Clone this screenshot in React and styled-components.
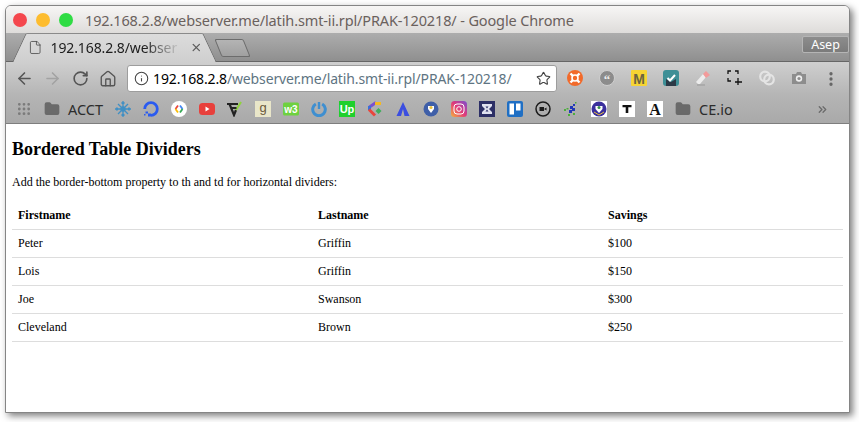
import styled, { createGlobalStyle } from 'styled-components';
import { ArrowLeft, ArrowRight, RotateCw, Home, Info, Star, File, Folder, Grip, MoreVertical, ChevronsRight, X } from 'lucide-react';

const GlobalStyle = createGlobalStyle`
  html, body { margin: 0; padding: 0; background: #fff; }
  body { width: 859px; height: 422px; overflow: hidden; }
`;

const rows = [
  ['Peter', 'Griffin', '$100'],
  ['Lois', 'Griffin', '$150'],
  ['Joe', 'Swanson', '$300'],
  ['Cleveland', 'Brown', '$250'],
];

// bookmark favicons, 16x16
const favicons = [
  <svg key="snow" viewBox="0 0 16 16" stroke="#3f8fc4" strokeWidth="1.3" fill="#3f8fc4"><path d="M8 0v16M0 8h16M3 3l10 10M13 3L3 13M6.500 1.500L8 3l1.500-1.500M6.500 14.500L8 13l1.500 1.500M1.500 6.500L3 8 1.500 9.500M14.500 6.500L13 8l1.500 1.500" fill="none" /><circle cx="8" cy="8" r="2" /></svg>,
  <svg key="do" viewBox="0 0 16 16" fill="none"><path d="M8 14.300A6.300 6.300 0 1 0 1.700 8" stroke="#2a5bf0" strokeWidth="2.800" /><path d="M5 12.500h3v3H5zM2.500 10.500h2.500v2H2.500zM1 13h1.500v1.500H1z" fill="#2a5bf0" /></svg>,
  <svg key="gdev" viewBox="0 0 16 16" fill="none" strokeWidth="1.800"><circle cx="8" cy="8" r="8" fill="#fff" /><path d="M7 4.500L4.500 8" stroke="#e8453c" /><path d="M4.500 8L7 11.500" stroke="#fbbc05" /><path d="M9 4.500L11.500 8" stroke="#4285f4" /><path d="M11.500 8L9 11.500" stroke="#34a853" /></svg>,
  <svg key="yt" viewBox="0 0 16 16"><rect y="2" width="16" height="12" rx="3.500" fill="#e8403c" /><path d="M6.500 5.500L10.500 8l-4 2.500z" fill="#fff" /></svg>,
  <svg key="v" viewBox="0 0 16 16" fill="none"><path d="M0 3h11M2.500 3L7 14l2-5" stroke="#222" strokeWidth="2.200" /><path d="M9 9l5-8" stroke="#8fd33c" strokeWidth="2" /><path d="M5 7h4.500" stroke="#222" strokeWidth="1.800" /></svg>,
  <svg key="g" viewBox="0 0 16 16"><rect width="16" height="16" fill="#e9e6c9" /><text x="8" y="11" textAnchor="middle" fontFamily="Liberation Sans, sans-serif" fontSize="13" fill="#6b5a3a">g</text></svg>,
  <svg key="w3" viewBox="0 0 16 16"><rect y="1.500" width="16" height="13" rx="1.500" fill="#6ed13f" /><text x="8" y="12" textAnchor="middle" fontFamily="Liberation Sans, sans-serif" fontSize="10" fontWeight="700" fill="#fff">ᴡ3</text></svg>,
  <svg key="power" viewBox="0 0 16 16" fill="none" stroke="#3f8fd0" strokeWidth="3"><path d="M4.800 3a6.300 6.300 0 1 0 6.400 0" /><path d="M8 1v7" strokeWidth="2.400" /></svg>,
  <svg key="up" viewBox="0 0 16 16"><rect width="16" height="16" fill="#1fd02c" /><text x="8" y="12" textAnchor="middle" fontFamily="Liberation Sans, sans-serif" fontSize="11" fontWeight="700" fill="#fff">Up</text></svg>,
  <svg key="c" viewBox="0 0 16 16" fill="none" strokeWidth="3"><path d="M9 1.500L2.500 6" stroke="#7a4fd0" /><path d="M2.500 5v4" stroke="#3a6fd8" /><path d="M2 8.500L8 14.500" stroke="#e8453c" /><path d="M8 2.500h6" stroke="#f5b921" /><path d="M11.500 7l3 3-3 3-3-3z" fill="#3fae5a" stroke="none" /></svg>,
  <svg key="atlas" viewBox="0 0 16 16"><path d="M8 1l6.500 14H9.500L8 8 6 15H1.500z" fill="#3b4ee0" /></svg>,
  <svg key="uni" viewBox="0 0 16 16"><circle cx="8" cy="8" r="7.500" fill="#3f5fa8" /><path d="M5 5h6v3l-3 4-3-4z" fill="#fff" /><circle cx="8" cy="6.500" r="1.500" fill="#e8c03c" /></svg>,
  <svg key="ig" viewBox="0 0 16 16" fill="none"><defs><linearGradient id="ig" x1="0" y1="1" x2="1" y2="0"><stop offset="0" stopColor="#f5b13c" /><stop offset=".5" stopColor="#e0397a" /><stop offset="1" stopColor="#7a4fd0" /></linearGradient></defs><rect width="16" height="16" rx="3.500" fill="url(#ig)" /><rect x="3" y="3" width="10" height="10" rx="3" stroke="#fff" /><circle cx="8" cy="8" r="2.300" stroke="#fff" /></svg>,
  <svg key="x" viewBox="0 0 16 16"><rect width="16" height="16" fill="#2c2f66" /><path d="M3 3h10v2l-3 3 3 3v2H3v-2l3-3-3-3z" fill="#dfe1f0" /><path d="M6.500 5.500h3L8 7.500zM8 8.500l1.500 2h-3z" fill="#2c2f66" /></svg>,
  <svg key="trello" viewBox="0 0 16 16"><rect width="16" height="16" rx="2" fill="#1f6fc4" /><rect x="2.500" y="2.500" width="4.500" height="11" fill="#fff" /><rect x="9" y="2.500" width="4.500" height="7" fill="#fff" /></svg>,
  <svg key="rec" viewBox="0 0 16 16" fill="none"><circle cx="8" cy="8" r="7" stroke="#1c1c1c" strokeWidth="1.500" /><path d="M4.500 6h4.500v4H4.500zM9 8l2.500-1.500v3z" fill="#1c1c1c" /></svg>,
  <svg key="dots" viewBox="0 0 16 16" fill="#2238b8"><path d="M7 5h3v3H7zM9 7h3v3H9zM6 9h3v3H6zM10 3h2v2h-2z" /><path d="M1 8h2v2H1zM12 1h1.500v1.500H12zM5 13h2v2H5zM10 12h2v2h-2zM3.500 7h2v1.500h-2z" fill="#4caf3c" /></svg>,
  <svg key="tut" viewBox="0 0 16 16"><rect width="16" height="16" fill="#fff" /><circle cx="8" cy="8" r="7.500" fill="#3a2f9c" /><path d="M4.500 5h7v3L8 12 4.500 8z" fill="#fff" /><circle cx="8" cy="6.500" r="1.500" fill="#3a8f4c" /><path d="M3 11l5 3 5-3" stroke="#e8c03c" fill="none" /></svg>,
  <svg key="t" viewBox="0 0 16 16"><rect width="16" height="16" fill="#fff" /><path d="M3.500 4h9v2.200H9.300V12H6.700V6.200H3.500z" fill="#111" /></svg>,
  <svg key="a" viewBox="0 0 16 16"><rect width="16" height="16" fill="#fff" /><text x="8" y="14" textAnchor="middle" fontFamily="Liberation Serif, serif" fontSize="16" fontWeight="700" fill="#111">A</text></svg>,
];

// extension toolbar icons, 16x16
const extensions = [
  <svg key="orange" viewBox="0 0 16 16"><circle cx="8" cy="8" r="8" fill="#f26a2a" /><circle cx="8" cy="8" r="3" fill="none" stroke="#fff" strokeWidth="1.600" /><path d="M3.500 3.500l2.500 2.500M12.500 3.500L10 6M3.500 12.500L6 10M12.500 12.500L10 10" stroke="#fff" strokeWidth="2.400" /></svg>,
  <svg key="quote" viewBox="0 0 16 16"><circle cx="8" cy="8" r="7.500" fill="#8c8c8c" stroke="#cfcfcf" /><text x="8" y="14" textAnchor="middle" fontFamily="Liberation Serif, serif" fontSize="13" fontWeight="700" fill="#eee">“</text></svg>,
  <svg key="m" viewBox="0 0 16 16"><rect width="16" height="16" rx="1" fill="#f7d433" /><text x="8" y="13.500" textAnchor="middle" fontFamily="Liberation Sans, sans-serif" fontSize="14" fontWeight="700" fill="#6b6440">M</text></svg>,
  <svg key="check" viewBox="0 0 16 16"><rect width="16" height="16" rx="3" fill="#3e8f96" /><path d="M3 9l5 3 5-3v7H3z" fill="#2d3a47" /><path d="M4.500 8L7 10.500 12 5" fill="none" stroke="#fff" strokeWidth="2" /></svg>,
  <svg key="eraser" viewBox="0 0 16 16"><path d="M1 12l7-8 3 3-6 7H3z" fill="#ececec" /><path d="M8 4l3-3 4 4-4 3z" fill="#f29a9a" /><path d="M2 15h8" stroke="#999" /></svg>,
  <svg key="crop" viewBox="0 0 16 16" fill="none" stroke="#111" strokeWidth="1.300"><path d="M1 4V1h3M8 1h3v3M1 8v3h3" /><path d="M11 8v7M8 12h7" /></svg>,
  <svg key="swirl" viewBox="0 0 16 16" fill="none" stroke="#e4e4e4" strokeWidth="2.200"><circle cx="6" cy="6.500" r="4.800" /><circle cx="10" cy="9.500" r="4.800" /></svg>,
  <svg key="cam" viewBox="0 0 16 16"><path d="M1 4h4l1-2h4l1 2h4v10H1z" fill="#8d8d8d" /><circle cx="8" cy="8.500" r="3.200" fill="#eee" /><circle cx="8" cy="8.500" r="1.600" fill="#8d8d8d" /></svg>,
];

const App = () => (
  <Page>
    <GlobalStyle />
    <Win>
      <TitleBar>
        <Light $color="#f4474d" />
        <Light $color="#fdbc2e" />
        <Light $color="#2fdc44" />
        <TitleText>192.168.2.8/webserver.me/latih.smt-ii.rpl/PRAK-120218/ - Google Chrome</TitleText>
      </TitleBar>

      <TabStrip>
        <Tab>
          <File size={15} strokeWidth={1.3} color="#444" />
          <TabLabel>192.168.2.8/webser</TabLabel>
          <X size={13} strokeWidth={2.4} color="#5c5c5c" />
        </Tab>
        <NewTab />
        <Profile>Asep</Profile>
      </TabStrip>

      <Toolbar>
        <NavBtn><ArrowLeft size={19} strokeWidth={2} color="#555" /></NavBtn>
        <NavBtn><ArrowRight size={19} strokeWidth={2} color="#a2a2a2" /></NavBtn>
        <NavBtn><RotateCw size={17} strokeWidth={2.3} color="#555" /></NavBtn>
        <NavBtn><Home size={18} strokeWidth={1.8} color="#555" /></NavBtn>
        <Omnibox>
          <Info size={15} strokeWidth={1.7} color="#444" />
          <Url><b>192.168.2.8</b>/webserver.me/latih.smt-ii.rpl/PRAK-120218/</Url>
          <Star size={15} strokeWidth={1.8} color="#444" />
        </Omnibox>
        <Extensions>
          {extensions.map((icon) => <ExtBtn key={icon.key}>{icon}</ExtBtn>)}
          <ExtBtn><MoreVertical size={18} strokeWidth={2.4} color="#666" /></ExtBtn>
        </Extensions>
      </Toolbar>

      <BookmarkBar>
        <BookmarkIcon><Grip size={16} strokeWidth={2.2} color="#7b7b7b" /></BookmarkIcon>
        <BookmarkIcon><Folder size={16} fill="#6a6a6a" color="#6a6a6a" /></BookmarkIcon>
        <BookmarkText>ACCT</BookmarkText>
        {favicons.map((icon) => <BookmarkIcon key={icon.key}>{icon}</BookmarkIcon>)}
        <BookmarkIcon><Folder size={16} fill="#6a6a6a" color="#6a6a6a" /></BookmarkIcon>
        <BookmarkText>CE.io</BookmarkText>
        <More><ChevronsRight size={13} strokeWidth={2.4} color="#6a6a6a" /></More>
      </BookmarkBar>

      <Content>
        <Heading>Bordered Table Dividers</Heading>
        <Lead>Add the border-bottom property to th and td for horizontal dividers:</Lead>
        <Table>
          <colgroup>
            <col width="300" />
            <col width="290" />
            <col />
          </colgroup>
          <thead>
            <tr><Th>Firstname</Th><Th>Lastname</Th><Th>Savings</Th></tr>
          </thead>
          <tbody>
            {rows.map((row) => (
              <tr key={row[0]}>
                {row.map((cell, i) => <Td key={i}>{cell}</Td>)}
              </tr>
            ))}
          </tbody>
        </Table>
      </Content>
    </Win>
  </Page>
);

const Page = styled.div`
  box-sizing: border-box;
  width: 859px;
  height: 422px;
  padding: 5px 9px 9px 5px;
`;

const Win = styled.div`
  box-sizing: border-box;
  height: 408px;
  display: flex;
  flex-direction: column;
  border: 1px solid #858585;
  border-radius: 6px 6px 0 0;
  background: #fff;
  box-shadow: 3px 3px 7px rgba(0, 0, 0, 0.5);
  overflow: hidden;
`;

const TitleBar = styled.div`
  flex: none;
  height: 27px;
  display: flex;
  align-items: center;
  gap: 9px;
  padding-left: 7px;
  background: linear-gradient(#f7f6f5, #dedcda);
`;

const Light = styled.span`
  flex: none;
  width: 14px;
  height: 14px;
  border-radius: 50%;
  background: ${(p) => p.$color};
`;

const TitleText = styled.span`
  margin-left: 3px;
  font: 14.5px "Noto Sans", sans-serif;
  letter-spacing: -0.13px;
  color: #6a615d;
  white-space: nowrap;
`;

const TabStrip = styled.div`
  flex: none;
  box-sizing: border-box;
  height: 29px;
  display: flex;
  align-items: flex-end;
  padding-left: 6px;
  background: linear-gradient(#adadad, #8f8f8f);
  border-bottom: 1px solid #666;
`;

const Tab = styled.div`
  position: relative;
  isolation: isolate;
  box-sizing: border-box;
  width: 205px;
  height: 29px;
  margin-bottom: -1px;
  display: flex;
  align-items: center;
  padding: 0 14px 0 16px;
  gap: 8px;

  &::before,
  &::after {
    content: '';
    position: absolute;
    top: 0;
    bottom: 0;
    width: 60%;
    z-index: -1;
    background: linear-gradient(#dcdcdc, #cfcfcf);
    border-top: 1px solid #8a8a8a;
  }
  &::before {
    left: 7px;
    transform: skewX(-25deg);
    border-left: 1px solid #6e6e6e;
    border-top-left-radius: 2px;
  }
  &::after {
    right: 7px;
    transform: skewX(25deg);
    border-right: 1px solid #6e6e6e;
    border-top-right-radius: 2px;
  }
`;

const TabLabel = styled.span`
  flex: none;
  width: 131px;
  margin-right: 1px;
  white-space: nowrap;
  font: 14px "Noto Sans", sans-serif;
  letter-spacing: -0.1px;
  color: #1d1d1d;
  mask-image: linear-gradient(to right, #000 72%, transparent 100%);
`;

const NewTab = styled.div`
  width: 27px;
  height: 16px;
  margin: 0 0 4px 1px;
  transform: skewX(22deg);
  background: linear-gradient(#b4b4b4, #a0a0a0);
  border: 1px solid #6c6c6c;
  border-radius: 2px;
`;

const Profile = styled.div`
  box-sizing: border-box;
  width: 47px;
  height: 17px;
  margin: 0 0 8px auto;
  text-align: center;
  background: linear-gradient(#8d8d8d, #7b7b7b);
  border: 1px solid #b5b5b5;
  border-radius: 2px;
  font: 12.5px/15px "Noto Sans", sans-serif;
  color: #fff;
`;

const Toolbar = styled.div`
  flex: none;
  height: 33px;
  display: flex;
  align-items: center;
  padding-left: 4px;
  background: linear-gradient(#cfcfcf, #b5b5b5);
`;

const NavBtn = styled.div`
  flex: none;
  width: 28px;
  display: flex;
  justify-content: center;
`;

const Omnibox = styled.div`
  flex: none;
  box-sizing: border-box;
  width: 430px;
  height: 27px;
  margin-left: 5px;
  display: flex;
  align-items: center;
  padding: 0 5px 0 6px;
  background: #fff;
  border: 1px solid #9d9d9d;
  border-radius: 3px;
`;

const Url = styled.span`
  flex: 1;
  margin-left: 4px;
  font: 14px "Noto Sans", sans-serif;
  letter-spacing: -0.13px;
  color: #5e7482;
  white-space: nowrap;

  b {
    font-weight: 400;
    color: #000;
  }
`;

const Extensions = styled.div`
  display: flex;
  margin-left: 2px;
`;

const ExtBtn = styled.div`
  flex: none;
  width: 32px;
  display: flex;
  justify-content: center;

  svg {
    display: block;
  }
  svg:not([class]) {
    width: 16px;
    height: 16px;
  }
`;

const BookmarkBar = styled.div`
  flex: none;
  box-sizing: border-box;
  height: 29px;
  display: flex;
  align-items: center;
  padding-left: 4px;
  background: linear-gradient(#b5b5b5, #a9a9a9);
  border-bottom: 1px solid #7e7e7e;
`;

const BookmarkIcon = styled.div`
  flex: none;
  width: 28px;
  display: flex;
  justify-content: center;

  svg:not([class]) {
    width: 16px;
    height: 16px;
  }
`;

const BookmarkText = styled.span`
  margin: 0 6px 0 2px;
  font: 14.5px "Noto Sans", sans-serif;
  color: #2c2c2c;
`;

const More = styled.div`
  display: flex;
  margin-left: auto;
  margin-right: 20px;
`;

const Content = styled.div`
  flex: 1;
  padding: 0 6px;
  font: 12px "Liberation Serif", "Times New Roman", serif;
  color: #000;
`;

const Heading = styled.h2`
  margin: 15px 0 15px;
  font-size: 18px;
  font-weight: 700;
`;

const Lead = styled.p`
  margin: 0 0 12px;
`;

const Table = styled.table`
  width: 100%;
  table-layout: fixed;
  border-collapse: collapse;
  border-spacing: 0;
`;

const Th = styled.th`
  padding: 7px 6px;
  text-align: left;
  border-bottom: 1px solid #ddd;
  line-height: 13px;
`;

const Td = styled.td`
  padding: 7px 6px;
  text-align: left;
  border-bottom: 1px solid #ddd;
  line-height: 13px;
`;

export default App;
